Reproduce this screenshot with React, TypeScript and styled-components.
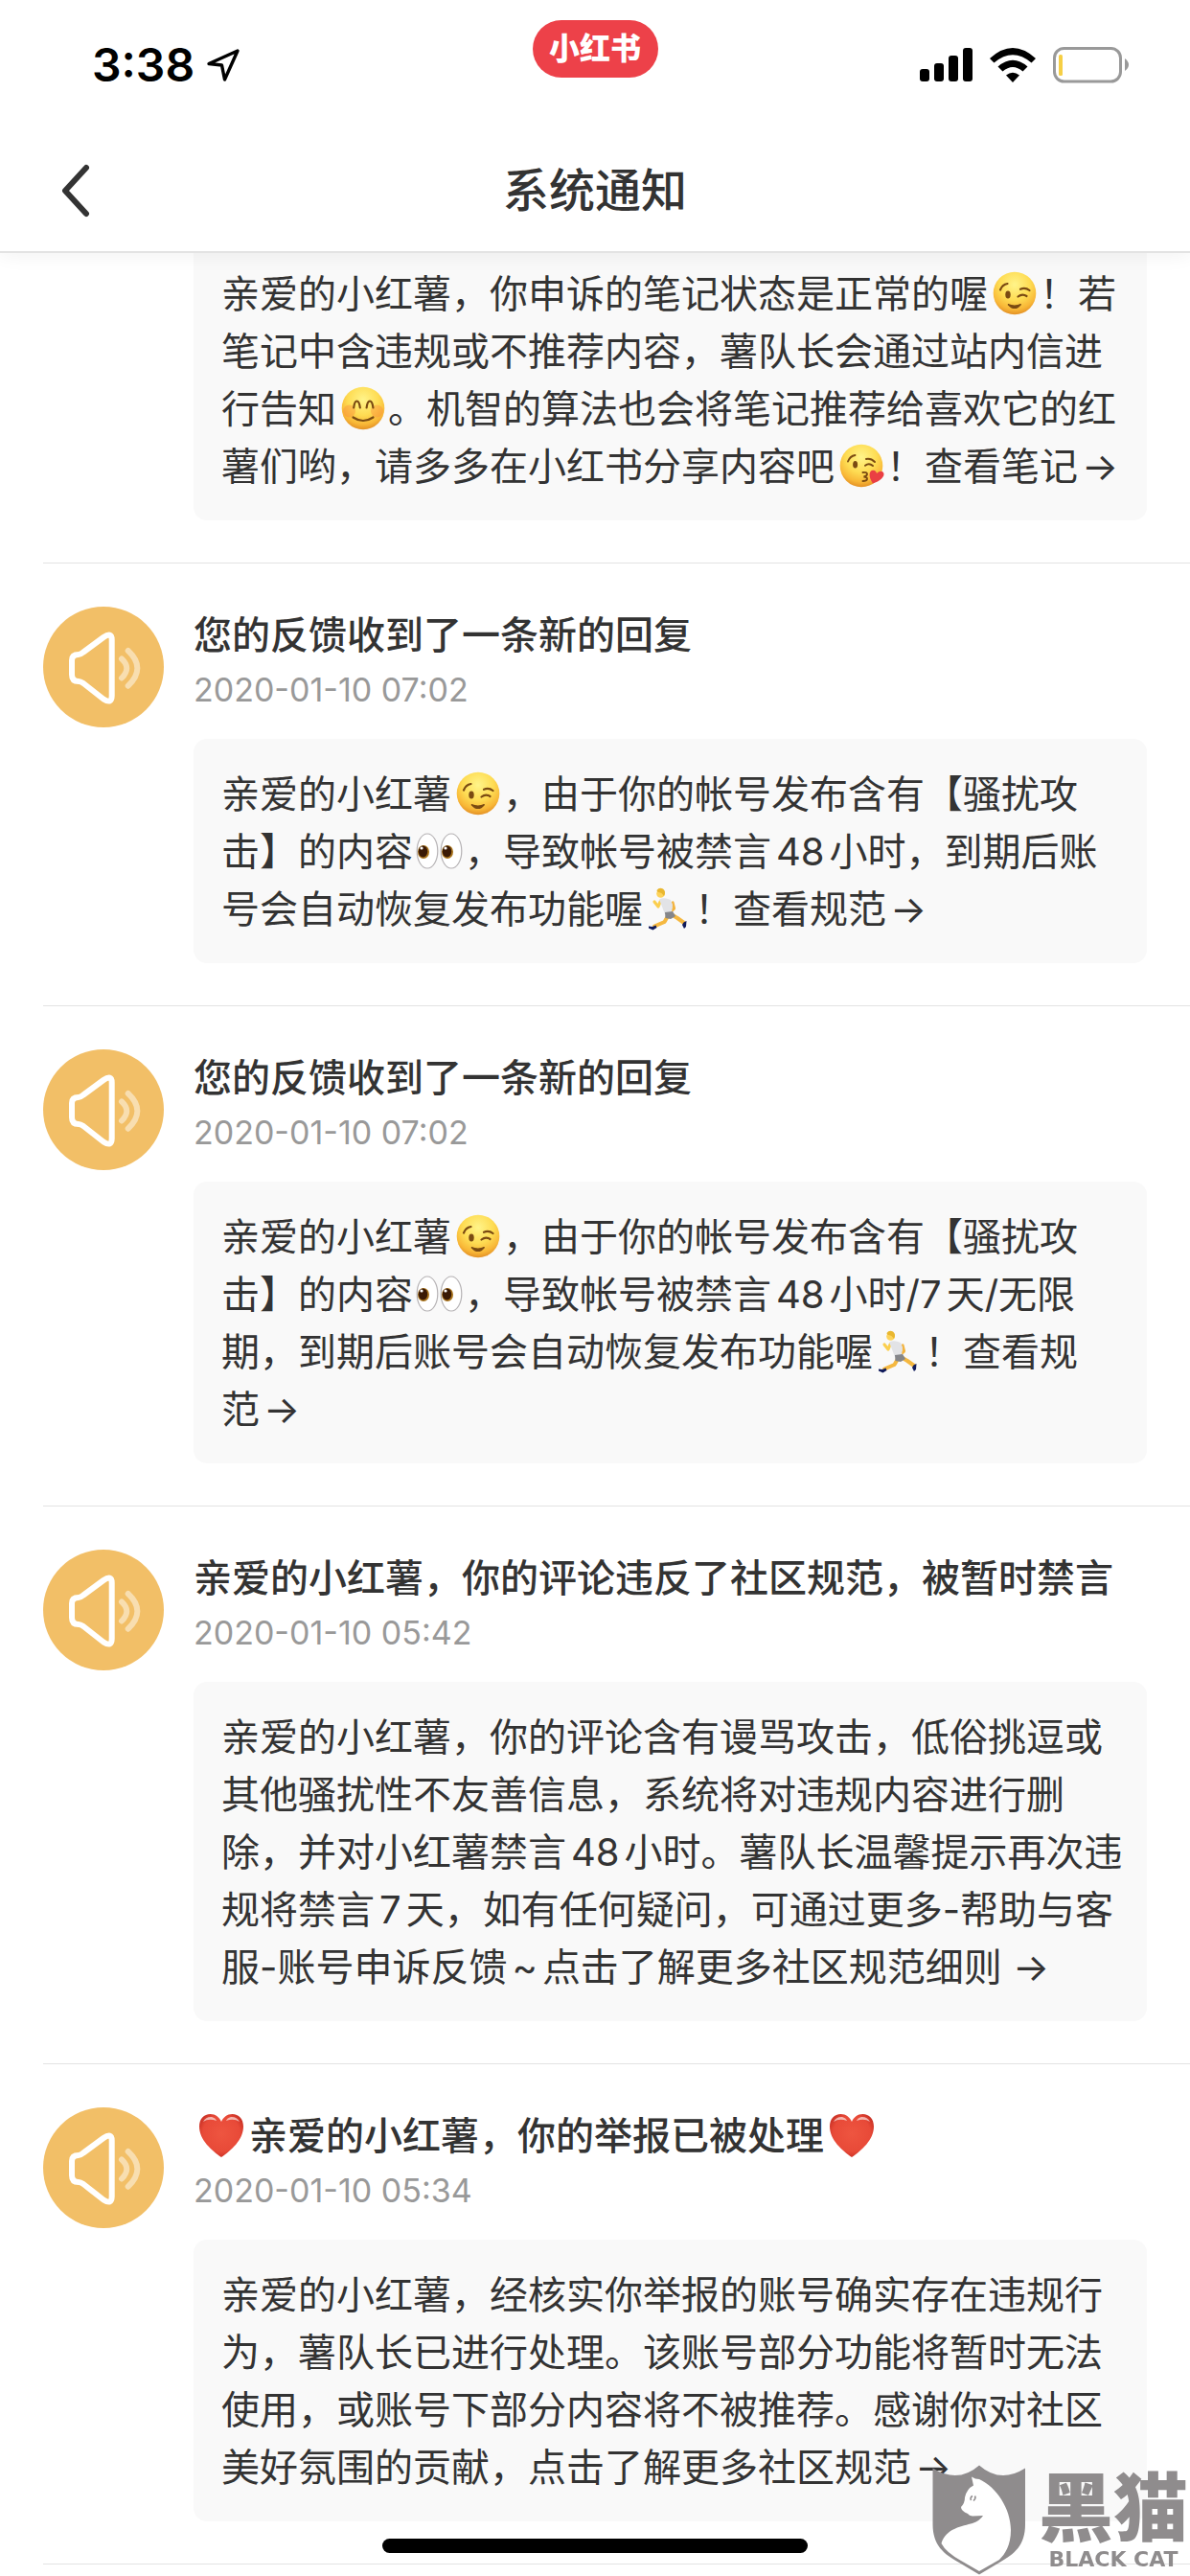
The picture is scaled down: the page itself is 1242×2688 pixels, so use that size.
import React, { useId } from 'react';
import styled, { createGlobalStyle } from 'styled-components';

const GlobalStyle = createGlobalStyle`
  *, *::before, *::after { box-sizing: border-box; }
  body {
    margin: 0;
    background: #fff;
    color: #333;
    font-family: Inter, "Noto Sans CJK SC", sans-serif;
    text-spacing-trim: space-all;
  }
`;

const Page = styled.div`
  min-height: 100vh;
  background: #fff;
  overflow: hidden;
`;

const Header = styled.header`
  position: relative;
  z-index: 1;
  background: #fff;
  border-bottom: 2px solid #e3e3e3;
  box-shadow: 0 2px 20px rgba(0, 0, 0, 0.06);
`;

const StatusBar = styled.div`
  display: grid;
  grid-template-columns: 1fr auto 1fr;
  align-items: center;
  height: 136px;
  padding: 0 64px 0 96px;
  color: #000;
`;

const Clock = styled.div`
  display: flex;
  align-items: center;
  gap: 12px;
  font-size: 48px;
  line-height: 58px;
  font-weight: 600;
`;

const AppPill = styled.div`
  align-self: start;
  margin-top: 21px;
  margin-right: 32px;
  width: 131px;
  height: 60px;
  border-radius: 30px;
  background: #ed4149;
  color: #fff;
  font-size: 32px;
  line-height: 60px;
  font-weight: 900;
  text-align: center;
`;

const StatusIcons = styled.div`
  display: flex;
  align-items: center;
  justify-content: flex-end;
  gap: 18px;
`;

const NavBar = styled.div`
  display: grid;
  grid-template-columns: 1fr auto 1fr;
  align-items: center;
  height: 126px;
  padding: 0 56px;
`;

const BackButton = styled.button`
  display: flex;
  justify-self: start;
  padding: 8px;
  border: 0;
  background: none;
  color: #333;
`;

const PageTitle = styled.h1`
  margin: 0;
  font-size: 48px;
  line-height: 64px;
  font-weight: 500;
`;

const List = styled.ul`
  margin: 0;
  padding: 0 0 0 45px;
  list-style: none;
`;

const Item = styled.li<{ $clipped?: boolean }>`
  display: grid;
  grid-template-columns: 126px minmax(0, 1fr);
  column-gap: 31px;
  padding: ${(p) => (p.$clipped ? 0 : 45)}px 45px 44px 0;
  border-bottom: 1px solid #e3e3e3;
`;

const Body = styled.div`
  grid-column: 2;
`;

const Subject = styled.h2`
  margin: 0;
  font-size: 40px;
  line-height: 60px;
  font-weight: 500;
`;

const Time = styled.time`
  display: block;
  margin-bottom: 24px;
  color: #999;
  font-size: 34px;
  line-height: 54px;
`;

const Message = styled.p<{ $clipped?: boolean }>`
  margin: 0;
  padding: ${(p) => (p.$clipped ? 13 : 28)}px 20px 26px 29px;
  border-radius: ${(p) => (p.$clipped ? '0 0 14px 14px' : '14px')};
  background: #f9f9f9;
  font-size: 40px;
  line-height: 60px;
`;

const More = styled.a`
  color: inherit;
  text-decoration: none;
`;

const Keep = styled.span`
  white-space: nowrap;
`;

const ArrowMark = styled.span`
  padding-left: 4px;
`;

const Num = styled.span<{ $joined?: boolean }>`
  padding: 0 5px 0 ${(p) => (p.$joined ? 0 : 5)}px;
`;

const Glyph = styled.svg`
  width: 54px;
  height: 54px;
  vertical-align: -12px;
`;

const HeartGlyph = styled(Glyph)`
  margin: 0 2px;
`;

const HomeIndicator = styled.div`
  position: fixed;
  bottom: 24px;
  left: 50%;
  width: 444px;
  height: 15px;
  margin-left: -222px;
  border-radius: 8px;
  background: #000;
`;

const Watermark = styled.div`
  position: fixed;
  right: 2px;
  bottom: 1px;
  display: flex;
  align-items: center;
  gap: 13px;
  color: #8f8c8d;
`;

const Brand = styled.div`
  display: flex;
  flex-direction: column;
  align-items: center;
`;

const BrandName = styled.span`
  font-size: 78px;
  line-height: 82px;
  font-weight: 900;
`;

const BrandLatin = styled.span`
  font-family: "DejaVu Sans", sans-serif;
  font-size: 22px;
  line-height: 24px;
  font-weight: 700;
  white-space: nowrap;
`;

/* ---------- emoji ---------- */

const ink = { fill: 'none', stroke: '#7a4a12', strokeWidth: 2.2, strokeLinecap: 'round' as const };

function Face({ label, children }: { label: string; children: React.ReactNode }) {
  const id = useId();
  return (
    <Glyph viewBox="0 0 54 54" role="img" aria-label={label}>
      <defs>
        <radialGradient id={id} cx="0.5" cy="0.3" r="0.72">
          <stop offset="0" stopColor="#fff48a" />
          <stop offset="0.5" stopColor="#fedc53" />
          <stop offset="0.8" stopColor="#f8b737" />
          <stop offset="1" stopColor="#e08a22" />
        </radialGradient>
      </defs>
      <circle cx="28" cy="27" r="22.3" fill={`url(#${id})`} />
      {children}
    </Glyph>
  );
}

const Wink = () => (
  <Face label="眨眼">
    <ellipse cx="21" cy="28.5" rx="2.7" ry="4" fill="#7a4a12" />
    <path d="M13 23.5Q15 18 20.5 17M31.5 30.5Q36 27 40.5 30M34 22.8Q39 20.5 43.5 24" {...ink} />
    <path d="M21 38.5Q28 46.5 34.5 38.5Q28 41.5 21 38.5Z" {...ink} fill="#7a4a12" strokeWidth="1.2" />
  </Face>
);

const Smile = () => (
  <Face label="微笑">
    <circle cx="13.5" cy="30" r="6.5" fill="#f98a3c" opacity="0.4" />
    <circle cx="42.5" cy="30" r="6.5" fill="#f98a3c" opacity="0.4" />
    <path d="M18.2 26.5Q19 19.5 21.4 19.5Q24 19.5 24.8 26.5M31.6 26.5Q32.4 19.5 35 19.5Q37.6 19.5 38.4 26.5M17.5 36.5Q28 43.5 38.5 36.5" {...ink} />
  </Face>
);

const Kiss = () => (
  <Face label="飞吻">
    <ellipse cx="21.6" cy="25.7" rx="2.5" ry="3.8" fill="#7a4a12" />
    <path d="M14 22.5Q16 17 21.5 16M32 26.8Q36 23.5 40 27M33 20Q38 19 42 23M29.5 34Q34 33.5 34 35.8Q34 37.8 30.5 38.5Q34.5 39 34 41Q33.5 43 29.5 43" {...ink} strokeWidth="1.9" />
    <path d="M40 45.5C35 38 36 32 40 31.8C43 31.8 43.8 34 44 35C45.5 33 49 31.5 51 34C53.5 38 47 43.5 40 45.5Z" fill="#ea3f43" />
  </Face>
);

const Eyes = () => (
  <Glyph viewBox="0 0 54 54" role="img" aria-label="眼睛">
    {[15, 40].map((x) => (
      <g key={x}>
        <ellipse cx={x} cy="27" rx="10.8" ry="18" fill="#fff" stroke="#b5b2b4" strokeWidth="1.2" />
        <ellipse cx={x - 4} cy="28" rx="6" ry="7" fill="#a9741c" />
        <ellipse cx={x - 4.5} cy="27.5" rx="4.7" ry="6" fill="#3a1a06" />
        <circle cx={x - 6} cy="24" r="1.6" fill="#fff" />
      </g>
    ))}
  </Glyph>
);

const Runner = () => (
  <Glyph viewBox="0 0 54 54" role="img" aria-label="跑步">
    <g fill="none" strokeLinecap="round" strokeLinejoin="round">
      <path d="M26 35L22.5 41L12 45.5M31 34L36 37L43 42" stroke="#f5b840" strokeWidth="4" />
      <path d="M18 20L16 25L12 20" stroke="#fbcf4f" strokeWidth="3.2" />
      <path d="M31 21L32.5 27L28 31" stroke="#f3b440" strokeWidth="3.2" />
    </g>
    <path d="M17 17.5Q22 15 29 18L31 23L30 32L23 33L20 25Z" fill="#e2e3e6" />
    <path d="M23 31L31 30L34 35L29 38L23.5 37Z" fill="#85868a" />
    <circle cx="18.5" cy="11.5" r="4.3" fill="#fdd35a" />
    <path d="M14.5 8Q17 4.5 21 6.5Q24.5 9 22 14L19.5 11L15 9.5Z" fill="#e9b72f" />
    <path d="M6 45.5L10 46L13.5 44.5L14.5 47L10.5 49.5L6 47.5ZM42.5 41.5L45.5 40L45 46L43 48L41 44Z" fill="#111c5c" />
  </Glyph>
);

function Heart() {
  const id = useId();
  return (
    <HeartGlyph viewBox="0 0 54 54" role="img" aria-label="红心">
      <defs>
        <radialGradient id={id} cx="0.5" cy="0.45" r="0.6">
          <stop offset="0" stopColor="#ee5540" />
          <stop offset="0.7" stopColor="#e84a38" />
          <stop offset="1" stopColor="#c22a20" />
        </radialGradient>
      </defs>
      <path d="M27 50C17 43 4 32 4 18C4 10 9 5 15.5 5C21 5 25 8.5 27 13C29 8.5 33 5 38.5 5C45 5 50 10 50 18C50 32 37 43 27 50Z" fill={`url(#${id})`} />
      <path d="M8 13Q11 7.5 17 8Q21 9 22 12Q14 9 8 13ZM46 13Q43 7.5 37 8Q33 9 32 12Q40 9 46 13Z" fill="#fff" opacity="0.6" />
    </HeartGlyph>
  );
}

/* ---------- icons ---------- */

const Speaker = () => (
  <svg width="126" height="126" viewBox="0 0 126 126" fill="none" strokeWidth="6" strokeLinecap="round" strokeLinejoin="round" aria-hidden="true">
    <circle cx="63" cy="63" r="63" fill="#f2bf67" />
    <path d="M37 50Q30 50 30 56V71Q30 78 37 78Q39 78 42 80L63 96.5Q71.7 102 71.7 93V34.5Q71.7 26 63 32L42 47.5Q39 50 37 50Z" stroke="#fff" />
    <path d="M82 54.5Q92.5 64 82 74.5M88.7 46Q108 64 88.7 82.7" stroke="#f8deb0" />
  </svg>
);

const LocationArrow = () => (
  <svg width="36" height="36" viewBox="0 0 36 36" fill="none" stroke="#000" strokeWidth="3.4" strokeLinejoin="round" aria-hidden="true">
    <path d="M33 3L3 16.5L16.5 18L19.5 33Z" />
  </svg>
);

const Signal = () => (
  <svg width="55" height="36" viewBox="0 0 55 36" aria-hidden="true">
    <rect x="0" y="22" width="10" height="13" rx="3" />
    <rect x="15" y="16" width="10" height="19" rx="3" />
    <rect x="30" y="8" width="10" height="27" rx="3" />
    <rect x="45" y="0" width="10" height="35" rx="3" />
  </svg>
);

const Wifi = () => (
  <svg width="48" height="36" viewBox="0 0 48 36" aria-hidden="true">
    <path d="M0 11Q24 -11 48 11L43.5 15.5Q24 -1 4.5 15.5Z" />
    <path d="M8.5 19.5Q24 6 39.5 19.5L34.5 24.5Q24 15.5 13.5 24.5Z" />
    <path d="M17 28.5Q24 23 31 28.5L24 36Z" />
  </svg>
);

const Battery = () => (
  <svg width="79" height="38" viewBox="0 0 79 38" aria-hidden="true">
    <rect x="1.5" y="1.5" width="69" height="34.5" rx="10" fill="none" stroke="#999" strokeWidth="3" />
    <path d="M75 12Q79 15 79 18.5Q79 22 75 25Z" fill="#999" />
    <rect x="6" y="8" width="4" height="22" rx="1.5" fill="#f6cf45" />
  </svg>
);

const Chevron = () => (
  <svg width="30" height="56" viewBox="0 0 30 56" fill="none" stroke="currentColor" strokeWidth="6" strokeLinecap="round" strokeLinejoin="round" aria-hidden="true">
    <path d="M26 4L4 28L26 52" />
  </svg>
);

const CatShield = () => (
  <svg width="98" height="115" viewBox="0 0 98 115" aria-hidden="true">
    <path d="M.5 3.5Q27 20 49 .5Q71 20 97 3.5V62C97 84 86 93 70 102L49 114.5L28 102C12 93 .5 84 .5 62Z" fill="currentColor" />
    <path d="M41 12.5L45 14.5L49 15C67 23 82 46 82 68C82 84 76 93 70 99L49 111L30 100Q14 91 9.5 82C14 66 32 64 42 61Q50 58 53 53L42 53.5Q38.5 53 37 51Q30 48 30 44Q34 40 34 34Q36 25 43 21.5Z" fill="#fff" />
    <path d="M40.5 37Q39 34 42 32.5M44.5 32.5Q46 35 43 37.5" fill="none" stroke="currentColor" strokeWidth="1.5" />
  </svg>
);

/* ---------- data ---------- */

interface Notice {
  title: React.ReactNode;
  time: string;
  text: React.ReactNode;
}

const RulesLink = () => (
  <More href="#rules">
    查看规<Keep>范<ArrowMark>→</ArrowMark></Keep>
  </More>
);

const notices: Notice[] = [
  {
    title: '您的反馈收到了一条新的回复',
    time: '2020-01-10 07:02',
    text: (
      <>
        亲爱的小红薯<Wink />，由于你的帐号发布含有【骚扰攻击】的内容<Eyes />，导致帐号被禁言<Num>48</Num>小时，到期后账号会自动恢复发布功能喔<Runner />！<RulesLink />
      </>
    ),
  },
  {
    title: '您的反馈收到了一条新的回复',
    time: '2020-01-10 07:02',
    text: (
      <>
        亲爱的小红薯<Wink />，由于你的帐号发布含有【骚扰攻击】的内容<Eyes />，导致帐号被禁言<Num>48</Num>小时<Num $joined>/7</Num>天/无限期，到期后账号会自动恢复发布功能喔<Runner />！<RulesLink />
      </>
    ),
  },
  {
    title: '亲爱的小红薯，你的评论违反了社区规范，被暂时禁言',
    time: '2020-01-10 05:42',
    text: (
      <>
        亲爱的小红薯，你的评论含有谩骂攻击，低俗挑逗或其他骚扰性不友善信息，系统将对违规内容进行删除，并对小红薯禁言<Num>48</Num>小时。薯队长温馨提示再次违规将禁言<Num>7</Num>天，如有任何疑问，可通过更多-帮助与客服-账号申诉反馈<Num>~</Num><More href="#community">点击了解更多社区规范细则 →</More>
      </>
    ),
  },
  {
    title: (
      <>
        <Heart />亲爱的小红薯，你的举报已被处理<Heart />
      </>
    ),
    time: '2020-01-10 05:34',
    text: (
      <>
        亲爱的小红薯，经核实你举报的账号确实存在违规行为，薯队长已进行处理。该账号部分功能将暂时无法使用，或账号下部分内容将不被推荐。感谢你对社区美好氛围的贡献，<More href="#community">点击了解更多社区规<Keep>范<ArrowMark>→</ArrowMark></Keep></More>
      </>
    ),
  },
];

export default function App() {
  return (
    <Page lang="zh-CN">
      <GlobalStyle />
      <Header>
        <StatusBar>
          <Clock>
            3:38
            <LocationArrow />
          </Clock>
          <AppPill>小红书</AppPill>
          <StatusIcons>
            <Signal />
            <Wifi />
            <Battery />
          </StatusIcons>
        </StatusBar>
        <NavBar>
          <BackButton type="button" aria-label="返回">
            <Chevron />
          </BackButton>
          <PageTitle>系统通知</PageTitle>
        </NavBar>
      </Header>
      <List>
        <Item $clipped>
          <Body>
            <Message $clipped>
              亲爱的小红薯，你申诉的笔记状态是正常的喔<Wink />！若笔记中含违规或不推荐内容，薯队长会通过站内信进行告知<Smile />。机智的算法也会将笔记推荐给喜欢它的红薯们哟，请多多在小红书分享内容吧<Kiss />！<More href="#note">查看笔<Keep>记<ArrowMark>→</ArrowMark></Keep></More>
            </Message>
          </Body>
        </Item>
        {notices.map((notice, index) => (
          <Item key={index}>
            <Speaker />
            <Body>
              <Subject>{notice.title}</Subject>
              <Time>{notice.time}</Time>
              <Message>{notice.text}</Message>
            </Body>
          </Item>
        ))}
      </List>
      <HomeIndicator />
      <Watermark>
        <CatShield />
        <Brand>
          <BrandName>黑猫</BrandName>
          <BrandLatin>BLACK CAT</BrandLatin>
        </Brand>
      </Watermark>
    </Page>
  );
}
